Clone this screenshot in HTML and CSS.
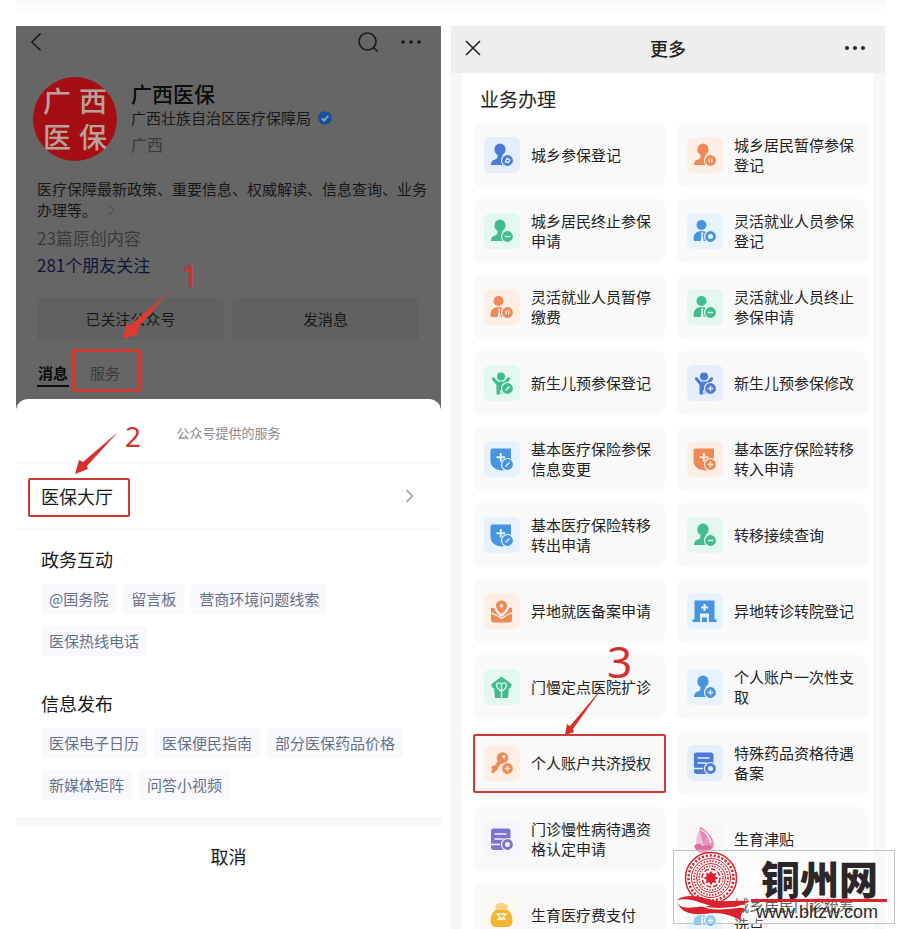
FILE: index.html
```html
<!DOCTYPE html>
<html lang="zh-CN">

<head>
  <meta charset="UTF-8">
  <meta name="viewport" content="width=device-width, initial-scale=1.0">
  <title>广西医保 个人账户共济授权</title>
  <link rel="stylesheet" href="styles.css">
</head>

<body>

  <!-- 图标库 -->
  <svg class="sprite" aria-hidden="true">
    <symbol id="person" viewBox="0 0 36 36">
      <ellipse cx="16" cy="12.500" rx="5.600" ry="6" />
      <path d="M7 28c0-3 1-4.500 4-5.500 2-.7 2.600-1.500 2.600-4.500h5c0 3 .6 3.800 2.600 4.500L24 24v4z" />
    </symbol>
    <symbol id="worker" viewBox="0 0 36 36">
      <circle cx="14.500" cy="12" r="5" />
      <path d="M6.500 26c0-5 3-8 8-8s8 3 8 8c0 1-.5 2-2 2h-12c-1.500 0-2-1-2-2z" />
      <path class="cut" d="M14 20l1.200-1 1.200 1-.6 2 .9 6h-3l.9-6z" />
    </symbol>
    <symbol id="baby" viewBox="0 0 36 36">
      <circle cx="17" cy="11.500" r="4" />
      <path d="M8.500 12.500c.8-.6 1.600-.4 2.200.4l3 3.600h6.600l3-3.600c.6-.8 1.400-1 2.200-.4.8.6.8 1.500.2 2.300L21.500 20v8.500h-3.700V25h-1.600v4.500h-3.700V20l-4.200-5.200c-.6-.8-.6-1.700.2-2.300z" />
    </symbol>
    <symbol id="shield" viewBox="0 0 36 36">
      <path d="M8.500 7.500h18.500v12.500c0 5-3.500 9-8.500 9.500C11.500 29.500 6.500 25.500 6.500 20V9.500c0-1.300.7-2 2-2z" />
      <path class="cut" d="M15.800 12h2v3.300h3.300v2h-3.300v3.300h-2v-3.300h-3.300v-2h3.300z" />
    </symbol>
    <symbol id="map" viewBox="0 0 36 36">
      <path d="M17.500 7.500c3.500 0 5.500 2.500 5.500 5.300 0 3-2.500 5.500-5.500 8.200-3-2.700-5.500-5.200-5.500-8.200 0-2.800 2-5.300 5.500-5.300z" />
      <circle class="cut" cx="17.500" cy="12.800" r="1.800" />
      <path d="M7 14.500l3.200.8c1.300 4 4 6.500 7.300 8.700 3.300-2.200 6-4.700 7.300-8.700l3.200-.8V27c0 1.500-1 2.500-2.500 2.500h-16C8 29.500 7 28.500 7 27z" />
      <path class="line" d="M6.500 20c4 .5 7 3 11 5.500 4-2.500 7-5 11-5.500" />
    </symbol>
    <symbol id="hospital" viewBox="0 0 36 36">
      <path d="M7.500 7.500h20v19h2V29h-24v-2.500h2z" />
      <path class="cut" d="M16.500 11h2v2.500H21v2h-2.500V18h-2v-2.500H14v-2h2.500zM13 20.500h9V29h-2v-4.500h-5V29h-2z" />
    </symbol>
    <symbol id="house" viewBox="0 0 36 36">
      <path d="M17.500 7.500l10.500 8-2 4-1-.5-1 10H11l-1-10-1 .5-2-4z" />
      <path class="line" d="M17.500 22.500c-4-3-5-4-5-6 0-3 3.500-3.500 5-1 1.500-2.500 5-2 5 1 0 2-1 3-5 6zM17.500 16.500v12" />
    </symbol>
    <symbol id="key" viewBox="0 0 36 36">
      <circle cx="18.500" cy="13" r="5.800" />
      <circle class="cut" cx="20" cy="11.800" r="1.700" />
      <path d="M14.500 15l3 3-7 9.500c-.6.8-1.500 1-2.200.4L7.500 27c-.5-.6-.5-1.200 0-1.800zM9 20l5 4-2 2-5-3z" />
    </symbol>
    <symbol id="doc" viewBox="0 0 36 36">
      <path d="M9.500 7.500h14.500c1.600 0 2.500.9 2.500 2.500V27c0 1.300-.9 2-2.500 2H10c-2 0-3-.9-3-2.500v-16.500C7 8.400 7.900 7.500 9.500 7.500z" />
      <path class="line" d="M10.500 13h12M10.500 18h9M7 23.500h9" />
    </symbol>
    <symbol id="baby-care" viewBox="0 0 36 36">
      <path d="M15 6c3 3 5 6 4 10-1 5-4 9-9 12-2-8 0-17 5-22z" opacity=".4" />
      <path d="M13 6c5 2 13 9 14 16 .3 4-2 7-6 7-3.500 0-5-4-5.500-9C15 15 12 11 13 6z" opacity=".7" />
      <path d="M7 25c3-3 6-3 9 0l5-1 5 1c-2 5-6 7-10 7s-7-2-9-7z" />
      <path class="line" d="M14 9c7 3 8 8 10 13" />
    </symbol>
    <symbol id="purse" viewBox="0 0 36 36">
      <path d="M11 11c0-3 3-5 6.500-5s6.500 2 6.500 5l-2 3h-9z" opacity=".55" />
      <path d="M11 13h13c3 3 5 7 4.500 12-.4 3-2.500 5-5.500 5H12c-3 0-5-2-5.500-5C6 20 8 16 11 13z" />
      <path class="line" d="M13 17h9l-4.500 5zM13 22h9" />
    </symbol>

    <!-- 右下角小标 -->
    <symbol id="b-play" viewBox="0 0 36 36">
      <circle class="badge" cx="23.500" cy="23.500" r="6" />
      <path class="line" d="M21.500 25l1.500-3.500 3 1.500-1.500 2.500z" />
    </symbol>
    <symbol id="b-pause" viewBox="0 0 36 36">
      <circle class="badge" cx="23.500" cy="23.500" r="6" />
      <path class="line" d="M22.300 21.500v4M24.800 21.500v4" />
    </symbol>
    <symbol id="b-minus" viewBox="0 0 36 36">
      <circle class="badge" cx="23.500" cy="23.500" r="6" />
      <path class="line" d="M20.800 23.500h5.400" />
    </symbol>
    <symbol id="b-edit" viewBox="0 0 36 36">
      <circle class="badge" cx="23.500" cy="23.500" r="6" />
      <path class="line" d="M21.500 25.500l4-4" />
    </symbol>
    <symbol id="b-ring" viewBox="0 0 36 36">
      <circle class="badge" cx="23.500" cy="23.500" r="6" />
      <circle class="cut" cx="23.500" cy="23.500" r="2.500" />
    </symbol>
    <symbol id="b-plus" viewBox="0 0 36 36">
      <circle class="badge" cx="23.500" cy="23.500" r="6" />
      <path class="line" d="M20.800 23.500h5.400M23.500 20.800v5.400" />
    </symbol>
  </svg>

  <main class="page">

    <!-- 左：公众号主页 + 服务弹层 -->
    <section class="phone account">
      <div class="topbar">
        <button type="button" class="icon-btn" aria-label="返回">
          <svg width="12" height="20" viewBox="0 0 12 20"><path d="M10.500 1.500L2 10l8.500 8.500" /></svg>
        </button>
        <button type="button" class="icon-btn search" aria-label="搜索">
          <svg width="22" height="22" viewBox="0 0 22 22"><circle cx="10.500" cy="10.500" r="8.500" /><path d="M16.500 16.500l4 4" /></svg>
        </button>
        <button type="button" class="icon-btn" aria-label="更多操作">
          <svg class="dots" width="22" height="6" viewBox="0 0 22 6"><circle cx="3" cy="3" r="1.800" /><circle cx="11" cy="3" r="1.800" /><circle cx="19" cy="3" r="1.800" /></svg>
        </button>
      </div>

      <header class="profile">
        <div class="avatar"><span>广</span><span>西</span><span>医</span><span>保</span></div>
        <div class="profile-info">
          <h1>广西医保</h1>
          <p class="org">广西壮族自治区医疗保障局
            <svg width="16" height="16" viewBox="0 0 16 16" aria-hidden="true">
              <path class="seal" d="M8 .8l2 1.400 2.500-.3.7 2.400 2 1.500L14.300 8l.9 2.200-2 1.500-.7 2.400-2.500-.3-2 1.400-2-1.400-2.500.3-.7-2.400-2-1.500L1.700 8l-.9-2.200 2-1.500.7-2.400 2.500.3z" />
              <path class="tick" d="M4.800 8.200l2.300 2.300 4.200-4.600" />
            </svg>
          </p>
          <p class="area">广西</p>
        </div>
      </header>

      <p class="intro">医疗保障最新政策、重要信息、权威解读、信息查询、业务办理等。
        <svg width="7" height="12" viewBox="0 0 7 12" aria-hidden="true"><path d="M1 1l5 5-5 5" /></svg>
      </p>
      <p class="count">23篇原创内容</p>
      <p class="count friends">281个朋友关注</p>

      <div class="actions">
        <button type="button">已关注公众号</button>
        <button type="button">发消息</button>
      </div>

      <nav class="tabs">
        <a href="#msg" class="on">消息</a>
        <a href="#service" class="mark mark-tab">服务</a>
      </nav>

      <div class="sheet" id="service">
        <p class="sheet-title">公众号提供的服务</p>
        <a href="#hall" class="hall">
          <span class="mark mark-hall">医保大厅</span>
          <svg width="9" height="14" viewBox="0 0 9 14" aria-hidden="true"><path d="M1.500 1l6 6-6 6" /></svg>
        </a>

        <section class="group">
          <h2>政务互动</h2>
          <div class="tags">
            <a href="#t1">@国务院</a>
            <a href="#t2">留言板</a>
            <a href="#t3">营商环境问题线索</a>
            <a href="#t4">医保热线电话</a>
          </div>
        </section>

        <section class="group">
          <h2>信息发布</h2>
          <div class="tags">
            <a href="#t5">医保电子日历</a>
            <a href="#t6">医保便民指南</a>
            <a href="#t7">部分医保药品价格</a>
            <a href="#t8">新媒体矩阵</a>
            <a href="#t9">问答小视频</a>
          </div>
        </section>

        <button type="button" class="cancel">取消</button>
      </div>

      <!-- 步骤 1、2 -->
      <div class="step step-1">
        <svg width="52" height="54" viewBox="0 0 52 54" aria-hidden="true">
          <defs>
            <linearGradient id="fade" x1="1" y1="0" x2="0" y2="1">
              <stop offset="0" stop-color="#e03a30" stop-opacity=".1" />
              <stop offset=".5" stop-color="#e03a30" />
            </linearGradient>
          </defs>
          <path fill="url(#fade)" d="M51 0L14 43l1 5L0 53l3-14 6-1z" />
        </svg>
        <span>1</span>
      </div>
      <div class="step step-2">
        <svg width="44" height="42" viewBox="0 0 44 42" aria-hidden="true"><path d="M43 0L12 34l1 3L0 42l4-14 4 2z" /></svg>
        <span>2</span>
      </div>
    </section>

    <!-- 右：更多业务 -->
    <section class="phone more">
      <header class="navbar">
        <button type="button" class="icon-btn" aria-label="关闭">
          <svg width="16" height="16" viewBox="0 0 16 16"><path d="M1 1l14 14M15 1L1 15" /></svg>
        </button>
        <h1>更多</h1>
        <button type="button" class="icon-btn" aria-label="更多操作">
          <svg class="dots" width="22" height="6" viewBox="0 0 22 6"><circle cx="3" cy="3" r="2" /><circle cx="11" cy="3" r="2" /><circle cx="19" cy="3" r="2" /></svg>
        </button>
      </header>

      <div class="panel">
        <h2>业务办理</h2>
        <div class="cards">
          <a href="#s1" class="card"><svg class="icon indigo"><use href="#person" /><use href="#b-play" /></svg><span>城乡参保登记</span></a>
          <a href="#s2" class="card"><svg class="icon orange"><use href="#person" /><use href="#b-pause" /></svg><span>城乡居民暂停参保登记</span></a>
          <a href="#s3" class="card"><svg class="icon green"><use href="#person" /><use href="#b-minus" /></svg><span>城乡居民终止参保申请</span></a>
          <a href="#s4" class="card"><svg class="icon blue"><use href="#worker" /><use href="#b-ring" /></svg><span>灵活就业人员参保登记</span></a>
          <a href="#s5" class="card"><svg class="icon orange"><use href="#worker" /><use href="#b-pause" /></svg><span>灵活就业人员暂停缴费</span></a>
          <a href="#s6" class="card"><svg class="icon green"><use href="#worker" /><use href="#b-minus" /></svg><span>灵活就业人员终止参保申请</span></a>
          <a href="#s7" class="card"><svg class="icon green"><use href="#baby" /><use href="#b-edit" /></svg><span>新生儿预参保登记</span></a>
          <a href="#s8" class="card"><svg class="icon indigo"><use href="#baby" /><use href="#b-plus" /></svg><span>新生儿预参保修改</span></a>
          <a href="#s9" class="card"><svg class="icon blue"><use href="#shield" /><use href="#b-edit" /></svg><span>基本医疗保险参保信息变更</span></a>
          <a href="#s10" class="card"><svg class="icon orange"><use href="#shield" /><use href="#b-plus" /></svg><span>基本医疗保险转移转入申请</span></a>
          <a href="#s11" class="card"><svg class="icon blue"><use href="#shield" /><use href="#b-edit" /></svg><span>基本医疗保险转移转出申请</span></a>
          <a href="#s12" class="card"><svg class="icon green"><use href="#person" /><use href="#b-minus" /></svg><span>转移接续查询</span></a>
          <a href="#s13" class="card"><svg class="icon orange"><use href="#map" /></svg><span>异地就医备案申请</span></a>
          <a href="#s14" class="card"><svg class="icon blue"><use href="#hospital" /></svg><span>异地转诊转院登记</span></a>
          <a href="#s15" class="card"><svg class="icon green"><use href="#house" /></svg><span>门慢定点医院扩诊</span></a>
          <a href="#s16" class="card"><svg class="icon blue"><use href="#person" /><use href="#b-plus" /></svg><span>个人账户一次性支取</span></a>
          <a href="#s17" class="card mark mark-card"><svg class="icon orange"><use href="#key" /><use href="#b-plus" /></svg><span>个人账户共济授权</span></a>
          <a href="#s18" class="card"><svg class="icon indigo"><use href="#doc" /><use href="#b-ring" /></svg><span>特殊药品资格待遇备案</span></a>
          <a href="#s19" class="card"><svg class="icon purple"><use href="#doc" /><use href="#b-ring" /></svg><span>门诊慢性病待遇资格认定申请</span></a>
          <a href="#s20" class="card"><svg class="icon pink"><use href="#baby-care" /></svg><span>生育津贴</span></a>
          <a href="#s21" class="card"><svg class="icon yellow"><use href="#purse" /></svg><span>生育医疗费支付</span></a>
          <a href="#s22" class="card"><svg class="icon sky"><use href="#worker" /><use href="#b-plus" /></svg><span>城乡居民门诊统筹选点</span></a>
        </div>
      </div>

      <!-- 步骤 3 -->
      <div class="step step-3">
        <svg width="38" height="48" viewBox="0 0 38 48" aria-hidden="true"><path d="M38 0L8 42l1 3-9 3 2-11 3 2z" /></svg>
        <span>3</span>
      </div>
    </section>
  </main>

  <!-- 站点水印 -->
  <aside class="watermark">
    <svg width="76" height="72" viewBox="0 0 76 72" aria-hidden="true">
      <circle cx="37" cy="27" r="26" fill="#fff" />
      <g fill="none" stroke="#d9232e">
        <circle cx="37" cy="27" r="25.500" stroke-width="1.500" />
        <circle cx="37" cy="27" r="22.500" stroke-width="2.500" stroke-dasharray="2.200 1.800" />
        <circle cx="37" cy="27" r="19.500" />
        <circle cx="37" cy="27" r="17" stroke-width="1.800" stroke-dasharray="1.500 1.500" />
        <circle cx="37" cy="27" r="14.500" />
        <circle cx="37" cy="27" r="12" stroke-width="1.500" stroke-dasharray="1.500 1.200" />
        <circle cx="37" cy="27" r="9" stroke-width="1.500" stroke-dasharray="5 2" />
      </g>
      <path fill="#d9232e" d="M37 19.500l1.800 3.200 3.500-1-1 3.500 3.200 1.800-3.200 1.800 1 3.500-3.500-1-1.800 3.200-1.800-3.200-3.500 1 1-3.500-3.200-1.800 3.200-1.800-1-3.500 3.500 1z" />
      <path fill="#fff" d="M3 49c12-8 24 0 37 3 11 2 20-1 30 3-4 8-20 6-34 7S9 66 3 49z" />
      <path fill="#d9232e" d="M3 49c8-6 20-4 31-1 13 4 25 1 42 2-9 5-22 9-35 6-15-4-25-10-38-7z" />
      <path fill="#d9232e" d="M3 50c3 8 10 7 20 6 16-2 36-4 48 2-3 3-5 7-4 12-7-5-17-8-27-8-13 1-32 5-37-12z" />
      <path fill="none" stroke="#fff" stroke-width="1.500" d="M4 52c10-4 20 2 31 5 12 2 24 0 36-2" />
    </svg>
    <div class="site">
      <strong>铜州网</strong>
      <span>www.bltzw.com</span>
    </div>
  </aside>

</body>

</html>
```

FILE: styles.css
```css
* {
  box-sizing: border-box;
}

body {
  margin: 0;
  height: 100vh;
  overflow: hidden;
  position: relative;
  background: #fff;
  color: #222;
  font-family: "Noto Sans CJK SC", "Noto Sans", sans-serif;
  font-size: 15px;
}

h1,
h2,
p {
  margin: 0;
  font-weight: 400;
}

a {
  color: inherit;
  text-decoration: none;
}

button {
  padding: 0;
  border: none;
  background: none;
  color: inherit;
  font: inherit;
  cursor: pointer;
}

.sprite {
  display: none;
}

.page {
  display: grid;
  grid-template-columns: 425fr 434fr;
  grid-template-rows: 16px minmax(0, 1fr);
  gap: 10px;
  height: 100%;
  padding: 0 15px 0 16px;
}

/* 顶部浅灰条 */
.page::before {
  content: "";
  grid-column: 1 / -1;
  background: linear-gradient(#f8f8f8 0 3px, #fcfcfc 3px 10px, #fff);
}

.phone {
  position: relative;
  display: flex;
  flex-direction: column;
}

.icon-btn {
  display: flex;
}

.icon-btn svg {
  fill: none;
  stroke: currentColor;
  stroke-width: 1.6px;
}

.icon-btn .dots {
  fill: currentColor;
  stroke: none;
}

/* 左侧 */
.account {
  background: #666;
  color: #191919;
}

.topbar {
  display: flex;
  align-items: center;
  gap: 21px;
  height: 32px;
  padding: 0 19px 0 14px;
}

.topbar .search {
  margin-left: auto;
}

.profile {
  display: flex;
  align-items: center;
  gap: 14px;
  margin-top: 19px;
  padding: 0 17px;
}

.avatar {
  display: grid;
  grid-template-columns: 1fr 1fr;
  flex: none;
  width: 84px;
  height: 84px;
  padding: 6px;
  border-radius: 50%;
  background: #a50e12;
  color: #b8a19c;
  font-size: 28px;
  font-weight: 500;
  line-height: 35px;
  text-align: center;
}

.profile h1 {
  color: #0c0c0c;
  font-size: 21px;
  font-weight: 500;
  line-height: 26px;
}

.org {
  display: flex;
  align-items: center;
  gap: 6px;
  line-height: 24px;
}

.org .seal {
  fill: #17509f;
}

.org .tick {
  fill: none;
  stroke: #8b9cb5;
  stroke-width: 2px;
}

.area {
  color: #3b3b3b;
  font-size: 16px;
  line-height: 28px;
}

.intro {
  margin-top: 17px;
  padding: 0 10px 0 21px;
  line-height: 21px;
}

.intro svg {
  margin-left: 8px;
  fill: none;
  stroke: #484848;
}

.intro + .count {
  margin-top: 4px;
}

.count {
  padding-left: 21px;
  color: #3b3b3b;
  font-size: 17px;
  line-height: 27px;
}

.friends {
  color: #10163a;
}

.actions {
  display: grid;
  grid-template-columns: 1fr 1fr;
  gap: 8px;
  margin-top: 20px;
  padding: 0 22px 0 21px;
}

.actions button {
  height: 42px;
  padding-bottom: 2px;
  border-radius: 4px;
  background: #616161;
}

.tabs {
  display: flex;
  gap: 20px;
  margin-top: 21px;
  padding-left: 21px;
  color: #3b3b3b;
  line-height: 24px;
}

.tabs a {
  padding: 0 1px;
  border-bottom: 2px solid transparent;
}

.tabs .on {
  border-color: #0c0c0c;
  color: #0c0c0c;
  font-weight: 700;
}

/* 服务弹层 */
.sheet {
  flex: 1;
  margin-top: 12px;
  border-radius: 12px 12px 0 0;
  background: #fff;
}

.sheet-title {
  padding-top: 4px;
  color: #8a8a8a;
  font-size: 13px;
  line-height: 60px;
  text-align: center;
}

.hall {
  display: flex;
  align-items: center;
  justify-content: space-between;
  height: 66px;
  padding: 0 27px 0 25px;
  border: solid #f8f8f8;
  border-width: 1px 0;
  font-size: 18px;
}

.hall svg {
  fill: none;
  stroke: #b0b0b0;
  stroke-width: 2px;
}

.group {
  padding: 17px 25px;
}

.group h2 {
  font-size: 18px;
  line-height: 26px;
}

.tags {
  display: flex;
  flex-wrap: wrap;
  gap: 12px 7px;
  margin-top: 12px;
}

.tags a {
  padding: 0 8px;
  border-radius: 4px;
  background: #f8f9fc;
  color: #66708c;
  line-height: 30px;
}

.cancel {
  display: block;
  width: 100%;
  height: 69px;
  border-top: 9px solid #f7f7f7;
  font-size: 18px;
}

/* 右侧 */
.more {
  background: #f7f7f7;
}

.navbar {
  display: flex;
  align-items: center;
  flex: none;
  height: 47px;
  padding: 0 19px 4px 14px;
  background: #eee;
}

.navbar h1 {
  flex: 1;
  padding-left: 11px;
  font-size: 18px;
  font-weight: 500;
  text-align: center;
}

.panel {
  flex: 1;
  min-height: 0;
  margin: 0 12px 0 11px;
  padding: 12px 5px 0 12px;
  overflow: hidden;
  background: #fff;
}

.panel h2 {
  padding-left: 6px;
  font-size: 19px;
  line-height: 28px;
}

.cards {
  display: grid;
  grid-template-columns: 1fr 1fr;
  grid-auto-rows: 64px;
  gap: 12px;
  margin-top: 10px;
}

.card {
  display: flex;
  align-items: center;
  gap: 11px;
  padding: 0 10px;
  border-radius: 8px;
  background: #f9f9f9;
  line-height: 20px;
}

/* 业务图标 */
.icon {
  flex: none;
  width: 36px;
  height: 36px;
  border-radius: 6px;
  background: var(--tile);
  fill: currentColor;
}

.cut {
  fill: var(--tile);
}

.line {
  fill: none;
  stroke: var(--tile);
  stroke-width: 1.3px;
}

.badge {
  stroke: var(--tile);
  stroke-width: 1.2px;
}

.indigo {
  --tile: #e6edfc;
  color: #4a7bd8;
}

.blue {
  --tile: #e6f2fd;
  color: #4794e0;
}

.green {
  --tile: #e4f8f0;
  color: #41bd8c;
}

.orange {
  --tile: #fdeee6;
  color: #ee8a57;
}

.purple {
  --tile: #f6f4fc;
  color: #7b74cf;
}

.pink {
  --tile: #fbf5f8;
  color: #df6da1;
}

.yellow {
  --tile: #fbf8f1;
  color: #f2b632;
}

.sky {
  --tile: #e6f5fc;
  color: #63b7e6;
}

/* 红框标注 */
.mark {
  position: relative;
}

.mark::after {
  content: "";
  position: absolute;
  border: 2px solid #cf3a35;
  border-radius: 2px;
}

.mark-tab::after {
  inset: -12px -20px -7px -17px;
  border-width: 3px;
}

.mark-hall::after {
  inset: -5px -17px -8px -13px;
}

.mark-card::after {
  inset: 3px -1px 2px;
}

/* 步骤箭头和数字 */
.step {
  position: absolute;
  display: flex;
  color: #d5312b;
  font-family: "Noto Sans", sans-serif;
  font-size: 28px;
  line-height: 28px;
}

.step svg {
  fill: currentColor;
}

.step-1 {
  top: 260px;
  left: 107px;
}

.step-1 span {
  margin: -24px 0 0 6px;
  font-size: 30px;
  font-weight: 500;
}

.step-2 {
  top: 406px;
  left: 59px;
}

.step-2 span {
  margin: -10px 0 0 6px;
}

.step-3 {
  top: 661px;
  left: 114px;
  font-size: 44px;
  line-height: 44px;
}

.step-3 span {
  margin: -48px 0 0 4px;
}

/* 水印 */
.watermark {
  position: absolute;
  right: 5px;
  bottom: 5px;
  display: flex;
  width: 222px;
  height: 74px;
  border: 1px solid #c4c4c4;
  background: rgba(255, 255, 255, 0.3);
  color: #2d2627;
}

.site {
  flex: 1;
  padding: 5px 7px 0 1px;
}

.site strong {
  display: block;
  padding-left: 10px;
  border-bottom: 3px solid #d9232e;
  font-size: 39px;
  font-weight: 900;
  line-height: 43px;
}

.site span {
  display: block;
  padding-left: 5px;
  font-family: "Liberation Sans", sans-serif;
  font-size: 18px;
  line-height: 20px;
}
```
